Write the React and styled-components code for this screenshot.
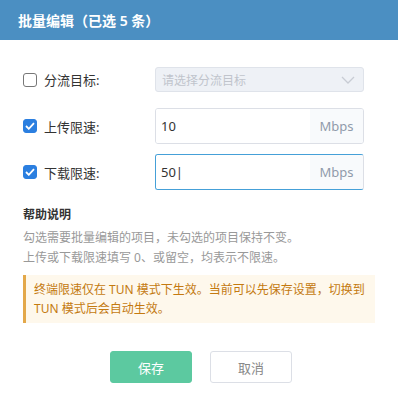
import React, { useState } from 'react'
import styled, { createGlobalStyle } from 'styled-components'

const Global = createGlobalStyle`
  html, body {
    margin: 0;
    padding: 0;
    background: #fff;
  }
  body {
    font-family: "Noto Sans", "Noto Sans CJK SC", sans-serif;
    color: #333;
  }
`

function BatchEdit() {
  const [up, setUp] = useState('10')
  const [down, setDown] = useState('50')
  return (
    <Dialog>
      <Header>批量编辑（已选 5 条）</Header>
      <Body>
        <Row $mb={16}>
          <Check>
            <Box />
            <span>分流目标:</span>
          </Check>
          <Select>
            <span>请选择分流目标</span>
            <svg width="14" height="8" viewBox="0 0 14 8">
              <path d="M1 1l6 6 6-6" fill="none" stroke="#c8ccd4" strokeWidth="1.3" />
            </svg>
          </Select>
        </Row>
        <Row $mb={10}>
          <Check>
            <Box $checked>
              <Tick />
            </Box>
            <span>上传限速:</span>
          </Check>
          <Group>
            <Input value={up} onChange={(e) => setUp(e.target.value)} />
            <Addon>Mbps</Addon>
          </Group>
        </Row>
        <Row $mb={0}>
          <Check>
            <Box $checked>
              <Tick />
            </Box>
            <span>下载限速:</span>
          </Check>
          <Group $focus>
            <Input value={down + '|'} onChange={(e) => setDown(e.target.value)} />
            <Addon>Mbps</Addon>
          </Group>
        </Row>
        <Help>
          <h4>帮助说明</h4>
          <p>勾选需要批量编辑的项目，未勾选的项目保持不变。</p>
          <p>上传或下载限速填写 0、或留空，均表示不限速。</p>
          <Warn>终端限速仅在 TUN 模式下生效。当前可以先保存设置，切换到 TUN 模式后会自动生效。</Warn>
        </Help>
        <Actions>
          <Button $primary>保存</Button>
          <Button>取消</Button>
        </Actions>
      </Body>
    </Dialog>
  )
}

function Tick() {
  return (
    <svg width="10" height="8" viewBox="0 0 10 8">
      <path d="M1 4l2.8 2.8L9 1.2" fill="none" stroke="#fff" strokeWidth="1.8" />
    </svg>
  )
}

const Dialog = styled.div`
  width: 398px;
  height: 396px;
  background: #fff;
`
const Header = styled.div`
  height: 40px;
  background: #4b8fc2;
  color: #fff;
  font-size: 14px;
  font-weight: 600;
  display: flex;
  align-items: center;
  padding-left: 18px;
`
const Body = styled.div`
  padding: 27px 23px 0;
`
const Row = styled.div`
  display: flex;
  align-items: center;
  margin-bottom: ${(p) => p.$mb}px;
`
const Check = styled.label`
  width: 132px;
  display: flex;
  align-items: center;
  gap: 7px;
  font-size: 13px;
  color: #333;
`
const Box = styled.span`
  width: 14px;
  height: 14px;
  box-sizing: border-box;
  border-radius: 3px;
  border: 1px solid ${(p) => (p.$checked ? '#2b7fe0' : '#777')};
  background: ${(p) => (p.$checked ? '#2b7fe0' : '#fff')};
  display: flex;
  align-items: center;
  justify-content: center;
`
const Select = styled.div`
  width: 209px;
  height: 25px;
  box-sizing: border-box;
  border: 1px solid #dfe3ea;
  border-radius: 3px;
  background: #eef1f6;
  display: flex;
  align-items: center;
  justify-content: space-between;
  padding: 0 8px 0 6px;
  font-size: 12px;
  color: #c0c4cc;
`
const Group = styled.div`
  width: 209px;
  height: 36px;
  box-sizing: border-box;
  display: flex;
  border-radius: 3px;
  border: 1px solid #dcdfe6;
  border-color: ${(p) => (p.$focus ? '#45a0d8 #dcdfe6 #45a0d8 #45a0d8' : '#dcdfe6')};
  overflow: hidden;
`
const Input = styled.input`
  flex: 1;
  min-width: 0;
  border: none;
  outline: none;
  padding: 0 5px;
  font-family: inherit;
  font-size: 13px;
  color: #333;
`
const Addon = styled.div`
  width: 53px;
  background: #f8fafc;
  color: #909aab;
  font-size: 13px;
  display: flex;
  align-items: center;
  justify-content: center;
`
const Help = styled.div`
  margin-top: 16px;
  h4 {
    margin: 0 0 4px;
    font-size: 12px;
    font-weight: 700;
    color: #333;
    line-height: 18px;
  }
  p {
    margin: 0;
    font-size: 12px;
    line-height: 20px;
    color: #999;
  }
`
const Warn = styled.div`
  margin-top: 7px;
  background: #fef8ec;
  border-left: 3px solid #e3a84a;
  padding: 5px 7px 5px 8px;
  color: #c47a10;
  font-size: 12px;
  line-height: 19px;
`
const Actions = styled.div`
  display: flex;
  justify-content: center;
  gap: 18px;
  margin-top: 28px;
  padding-left: 4px;
`
const Button = styled.button`
  width: 82px;
  height: 32px;
  border-radius: 3px;
  font-family: inherit;
  font-size: 13px;
  border: 1px solid ${(p) => (p.$primary ? '#5cc9a0' : '#dcdfe6')};
  background: ${(p) => (p.$primary ? '#5cc9a0' : '#fff')};
  color: ${(p) => (p.$primary ? '#fff' : '#888')};
`

export default function App() {
  return (
    <>
      <Global />
      <BatchEdit />
    </>
  )
}
